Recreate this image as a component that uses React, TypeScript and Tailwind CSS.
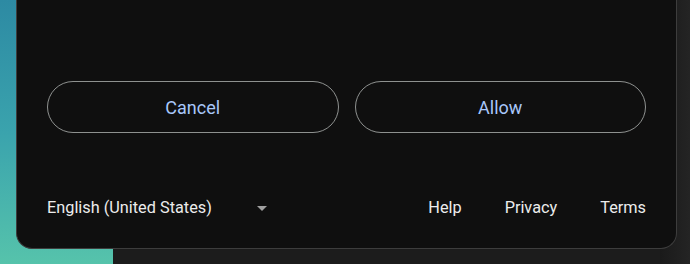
const font = { fontFamily: 'Roboto, "Noto Sans", Arial, sans-serif' };

export default function App() {
  return (
    <div
      className="relative h-[264px] w-[690px] overflow-hidden bg-[#1c1c1c]"
      style={font}
    >
      {/* desktop behind the dialog */}
      <div className="absolute left-0 top-0 h-full w-[113px] bg-gradient-to-b from-[#2d8aa3] via-[#3aa3ad] to-[#56c3ab]" />
      <div className="absolute right-0 top-0 h-full w-[30px] bg-gradient-to-r from-[#1a1a1a] to-[#242424]" />

      <div className="relative ml-[16px] flex h-[249px] w-[661px] flex-col rounded-b-[16px] border border-t-0 border-[#3d3d3d] bg-[#0f0f0f] px-[30px]">
        <p className="-mt-[18px] whitespace-nowrap text-[14px] leading-[20px] text-[#c4c7c5]">
          It can also manage the display name of this account. See its{' '}
          <span className="text-[#a8c7fa]">Privacy Policy</span>
        </p>

        <div className="mt-[79px] flex gap-[16px]">
          <button className="h-[52px] flex-1 rounded-full border border-[#8e918f] text-[18px] text-[#a8c7fa]">
            Cancel
          </button>
          <button className="h-[52px] flex-1 rounded-full border border-[#8e918f] text-[18px] text-[#a8c7fa]">
            Allow
          </button>
        </div>

        <div className="mt-[63px] flex items-center justify-between text-[16.3px] leading-[24px] text-[#ececec]">
          <div className="flex items-center">
            <span>English (United States)</span>
            <svg className="ml-[45px]" width="10" height="5" viewBox="0 0 10 5">
              <path d="M0 0h10L5 5z" fill="#a0a0a0" />
            </svg>
          </div>
          <div className="flex items-center gap-[43px]">
            <span>Help</span>
            <span>Privacy</span>
            <span>Terms</span>
          </div>
        </div>
      </div>
    </div>
  );
}
